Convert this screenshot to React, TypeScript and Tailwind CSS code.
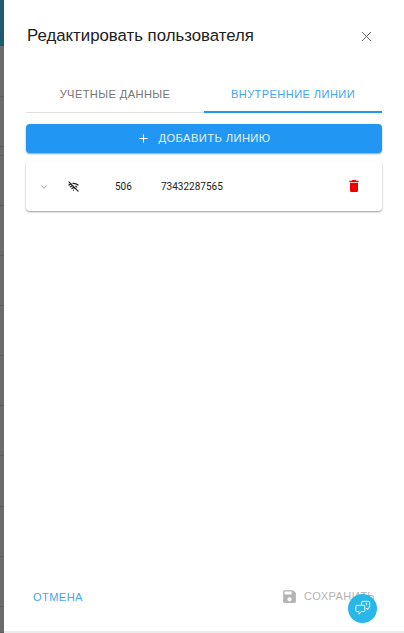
import React from 'react';
import { X, Plus, ChevronDown, WifiOff } from 'lucide-react';

const stripRows = [51, 50, 9, 50, 50, 50, 51, 50, 50, 51, 50, 50, 26];

const App: React.FC = () => {
  return (
    <div className="relative flex h-[633px] w-[404px] overflow-hidden bg-white font-['Liberation_Sans',sans-serif]">
      {/* page behind the drawer */}
      <div className="flex w-[4px] shrink-0 flex-col bg-[#6b6b6b]">
        <div className="h-[46px] bg-[#1f5a6e]" />
        {stripRows.map((h, i) => (
          <div key={i} className="border-b border-[#5c5c5c]" style={{ height: h }} />
        ))}
      </div>

      <div className="flex flex-1 flex-col border-b-2 border-[#ececec] px-[22px]">
        <div className="flex h-[71px] items-center justify-between pt-[1px]">
          <h2 className="ml-[1px] text-[16.8px] leading-[24px] text-[#212121]">Редактировать пользователя</h2>
          <button className="mr-[7px] text-[#616161]">
            <X size={17} strokeWidth={1.4} />
          </button>
        </div>

        <div className="flex h-[42px] border-b border-[#e0e0e0]">
          <div className="flex h-[42px] flex-1 items-center justify-center pt-[5px] text-[11.1px] tracking-[0.4px] text-[#757575]">
            УЧЕТНЫЕ ДАННЫЕ
          </div>
          <div className="flex h-[42px] flex-1 items-center justify-center border-b-2 border-[#2196f3] pt-[7px] text-[11.1px] tracking-[0.4px] text-[#42a5f5]">
            ВНУТРЕННИЕ ЛИНИИ
          </div>
        </div>

        <button className="mt-[11px] flex h-[29px] items-center justify-center gap-[8px] rounded-[4px] bg-[#2196f3] text-[11.2px] tracking-[0.4px] text-[#e3f2fd] shadow-[0_1px_2px_rgba(0,0,0,0.4)]">
          <Plus size={13} strokeWidth={2} className="text-white" />
          ДОБАВИТЬ ЛИНИЮ
        </button>

        <div className="mt-[9px] flex h-[49px] items-center rounded-[4px] bg-white font-['Roboto',sans-serif] text-[10px] text-[#212121] shadow-[0_1px_2px_rgba(0,0,0,0.4)]">
          <ChevronDown size={10} strokeWidth={1.5} className="ml-[13px] text-[#616161]" />
          <WifiOff size={11} strokeWidth={2.6} className="ml-[19px] text-[#212121]" />
          <span className="ml-[36px] w-[46px]">506</span>
          <span>73432287565</span>
          <span className="flex-1" />
          <TrashIcon />
        </div>

        <div className="flex-1" />

        <div className="flex h-[59px] items-start justify-between pt-[16px] text-[11.1px] tracking-[0.4px]">
          <button className="ml-[7px] mt-[1px] text-[#42a5f5]">ОТМЕНА</button>
          <button className="mr-[7px] flex items-center gap-[6px] text-[#b4b4b4]">
            <SaveIcon />
            СОХРАНИТЬ
          </button>
        </div>
      </div>

      {/* chat widget */}
      <div className="absolute left-[348px] top-[594px] flex h-[29px] w-[29px] items-center justify-center rounded-full bg-[#29b6e8] text-white">
        <ChatIcon />
      </div>
    </div>
  );
};

const TrashIcon = () => (
  <svg viewBox="0 0 24 24" className="mr-[20px] mb-[1px] h-[16px] w-[16px] fill-[#f00000]">
    <path d="M6 19c0 1.1.9 2 2 2h8c1.1 0 2-.9 2-2V7H6v12zM19 4h-3.5l-1-1h-5l-1 1H5v2h14V4z" />
  </svg>
);

const SaveIcon = () => (
  <svg viewBox="0 0 24 24" className="h-[17px] w-[17px] fill-[#b4b4b4]">
    <path d="M17 3H5c-1.11 0-2 .9-2 2v14c0 1.1.89 2 2 2h14c1.1 0 2-.9 2-2V7l-4-4zm-5 16c-1.66 0-3-1.34-3-3s1.34-3 3-3 3 1.34 3 3-1.34 3-3 3zm3-10H5V5h10v4z" />
  </svg>
);

const ChatIcon = () => (
  <svg viewBox="0 0 18 18" className="mb-[1px] h-[16px] w-[16px]" fill="none" stroke="currentColor" strokeWidth="1">
    <path d="M7.5 5.5V2.5a1 1 0 0 1 1-1h7a1 1 0 0 1 1 1v5.5a1 1 0 0 1-1 1h-1v2l-2-2" />
    <path d="M2 6h8a1 1 0 0 1 1 1v5a1 1 0 0 1-1 1H7l-2.5 3v-3H2a1 1 0 0 1-1-1V7a1 1 0 0 1 1-1z" />
    <path d="M12 3.5h1v2.5" />
  </svg>
);

export default App;
